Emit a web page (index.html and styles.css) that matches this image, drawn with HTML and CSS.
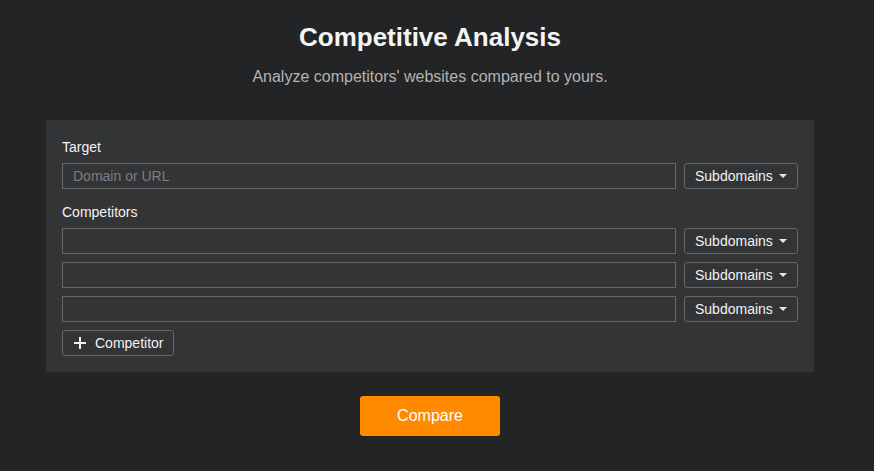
FILE: index.html
```html
<!DOCTYPE html>
<html lang="en">
<head>
<meta charset="utf-8">
<title>Competitive Analysis</title>
<link rel="stylesheet" href="styles.css">
</head>
<body>
<div class="page">
  <h1 class="title">Competitive Analysis</h1>
  <p class="subtitle">Analyze competitors' websites compared to yours.</p>
  <div class="panel">
    <div class="label">Target</div>
    <div class="row">
      <input class="field" type="text" placeholder="Domain or URL">
      <button class="select">Subdomains<span class="caret"></span></button>
    </div>
    <div class="label label-gap">Competitors</div>
    <div class="row">
      <input class="field" type="text">
      <button class="select">Subdomains<span class="caret"></span></button>
    </div>
    <div class="row row-gap">
      <input class="field" type="text">
      <button class="select">Subdomains<span class="caret"></span></button>
    </div>
    <div class="row row-gap">
      <input class="field" type="text">
      <button class="select">Subdomains<span class="caret"></span></button>
    </div>
    <div class="row row-gap">
      <button class="add">
        <svg class="plus" width="12" height="12" viewBox="0 0 12 12"><path d="M6 0v12M0 6h12" stroke="#f2f2f2" stroke-width="2"/></svg>
        <span>Competitor</span>
      </button>
    </div>
  </div>
  <div class="actions">
    <button class="compare">Compare</button>
  </div>
</div>
</body>
</html>
```
FILE: styles.css
```css
html, body {
  margin: 0;
  padding: 0;
  background: #232426;
  font-family: "Liberation Sans", Arial, sans-serif;
  color: #f2f2f2;
}
.page {
  width: 860px;
  padding-top: 22px;
}
.title {
  margin: 0;
  text-align: center;
  font-size: 26px;
  line-height: 30px;
  font-weight: bold;
  color: #f4f4f4;
}
.subtitle {
  margin: 16px 0 0;
  text-align: center;
  font-size: 16px;
  line-height: 18px;
  color: #b3b3b3;
}
.panel {
  margin: 34px 46px 0;
  background: #333436;
  padding: 19px 16px 16px;
}
.label {
  font-size: 14px;
  line-height: 16px;
  color: #f2f2f2;
  margin-bottom: 8px;
}
.label-gap {
  margin-top: 15px;
}
.row {
  display: flex;
  gap: 8px;
  height: 26px;
}
.row-gap {
  margin-top: 8px;
}
.field {
  flex: 1;
  box-sizing: border-box;
  height: 26px;
  margin: 0;
  border: 1px solid #666768;
  border-radius: 0;
  background: #333436;
  color: #f2f2f2;
  font-family: inherit;
  font-size: 14px;
  padding: 0 10px;
  outline: none;
}
.field::placeholder {
  color: #7d7e80;
}
.select {
  box-sizing: border-box;
  width: 114px;
  height: 26px;
  margin: 0;
  border: 1px solid #666768;
  border-radius: 3px;
  background: #333436;
  color: #f2f2f2;
  font-family: inherit;
  font-size: 14px;
  padding: 0 10px;
  display: flex;
  align-items: center;
  white-space: nowrap;
}
.caret {
  display: inline-block;
  width: 0;
  height: 0;
  margin-left: 6px;
  border-left: 4px solid transparent;
  border-right: 4px solid transparent;
  border-top: 4px solid #e6e6e6;
}
.add {
  box-sizing: border-box;
  width: 112px;
  height: 26px;
  margin: 0;
  border: 1px solid #666768;
  border-radius: 3px;
  background: #333436;
  color: #f2f2f2;
  font-family: inherit;
  font-size: 14px;
  padding: 0 10px 0 11px;
  display: flex;
  align-items: center;
  gap: 9px;
  white-space: nowrap;
}
.plus {
  display: block;
  flex: none;
}
.actions {
  display: flex;
  justify-content: center;
  margin-top: 24px;
}
.compare {
  width: 140px;
  height: 40px;
  margin: 0;
  border: none;
  border-radius: 3px;
  background: #ff8a00;
  color: #ffffff;
  font-family: inherit;
  font-size: 16px;
}
```
